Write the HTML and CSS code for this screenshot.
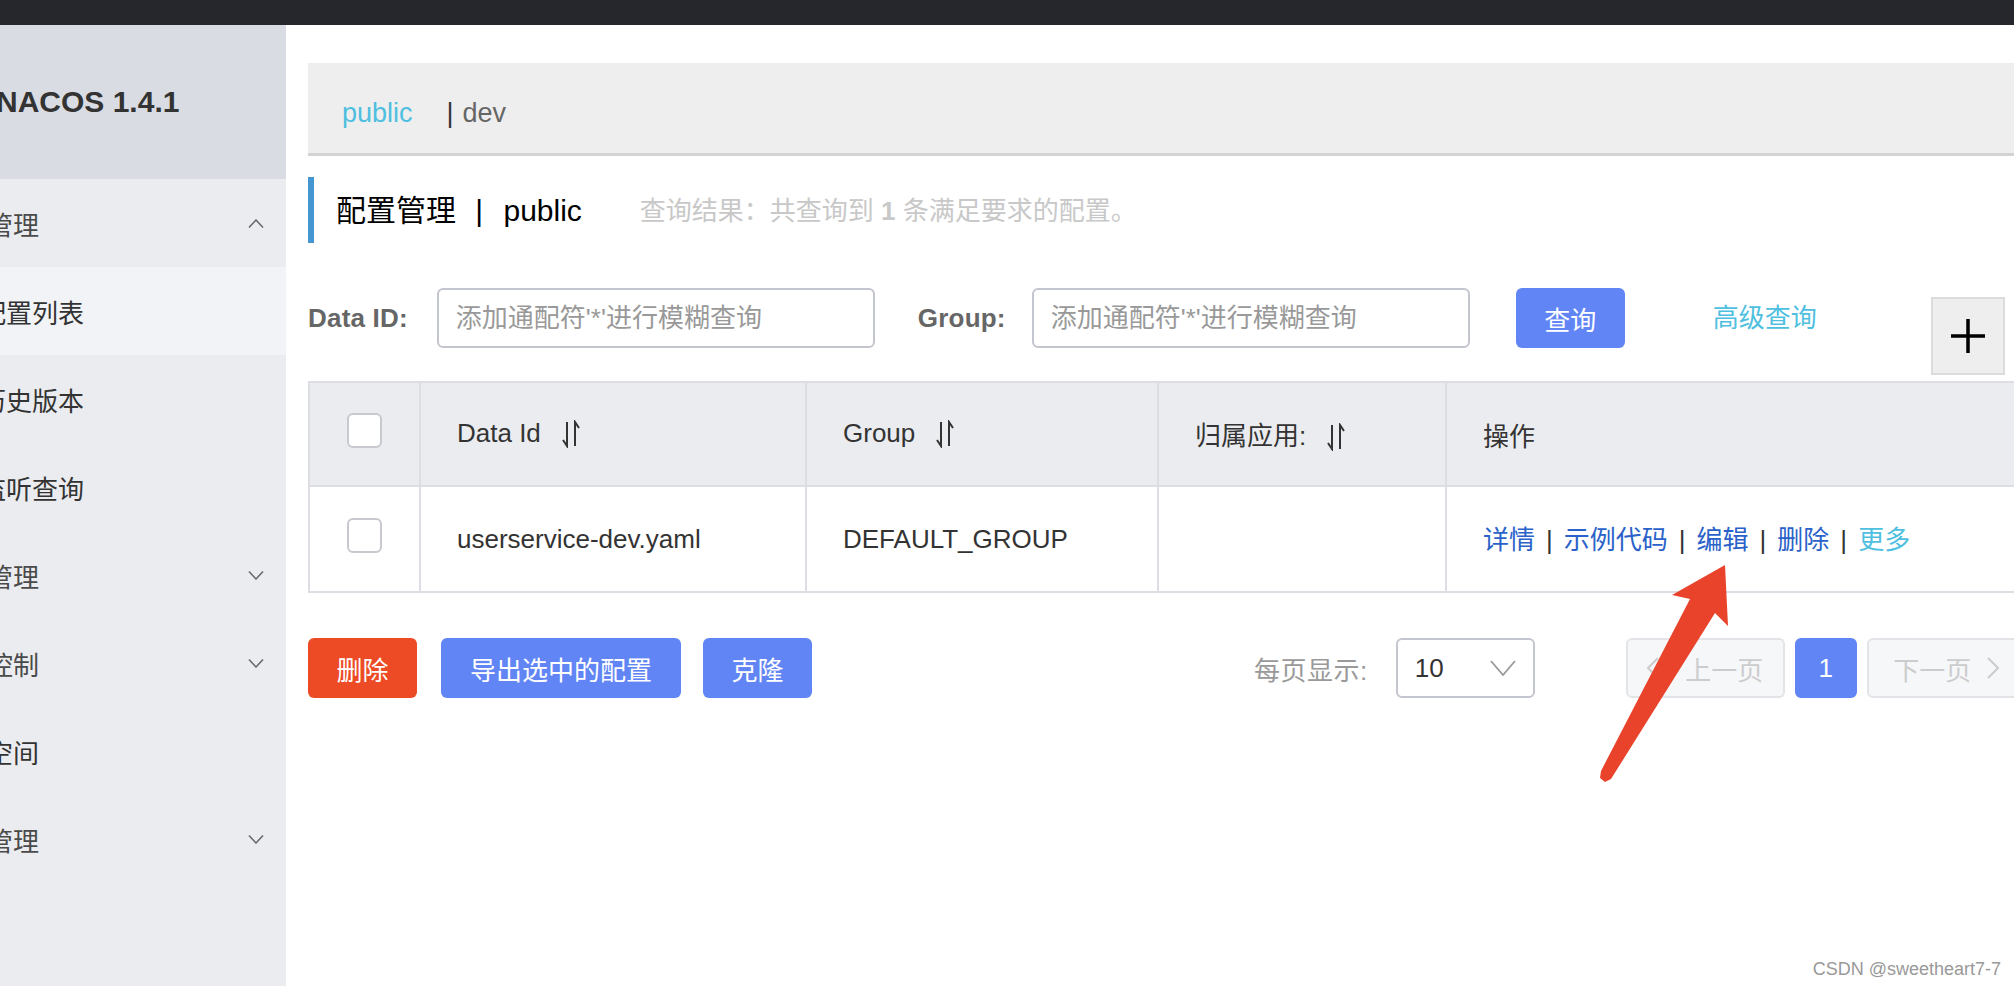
FILE: index.html
```html
<!DOCTYPE html>
<html lang="zh-CN">
<head>
<meta charset="utf-8">
<title>NACOS 配置管理</title>
<link rel="stylesheet" href="styles.css">
</head>
<body>
<div class="topbar"></div>
<div class="layout">
  <aside class="sidebar">
    <div class="brand"><span class="brand-text">NACOS 1.4.1</span></div>
    <ul class="nav">
      <li class="nav-item top"><span>配置管理</span><svg class="chev" viewBox="0 0 16 9"><path d="M1 8.5 L8 1 L15 8.5" fill="none" stroke="#666" stroke-width="1.5"/></svg></li>
      <li class="nav-item sub active"><span>配置列表</span></li>
      <li class="nav-item sub"><span>历史版本</span></li>
      <li class="nav-item sub"><span>监听查询</span></li>
      <li class="nav-item top"><span>服务管理</span><svg class="chev" viewBox="0 0 16 9"><path d="M1 0.5 L8 8 L15 0.5" fill="none" stroke="#666" stroke-width="1.5"/></svg></li>
      <li class="nav-item top"><span>权限控制</span><svg class="chev" viewBox="0 0 16 9"><path d="M1 0.5 L8 8 L15 0.5" fill="none" stroke="#666" stroke-width="1.5"/></svg></li>
      <li class="nav-item top dark"><span>命名空间</span></li>
      <li class="nav-item top"><span>集群管理</span><svg class="chev" viewBox="0 0 16 9"><path d="M1 0.5 L8 8 L15 0.5" fill="none" stroke="#666" stroke-width="1.5"/></svg></li>
    </ul>
  </aside>
  <main class="main">
    <div class="content">
      <div class="ns-bar">
        <span class="ns-cur">public</span><span class="ns-sep">|</span><span class="ns-other">dev</span>
      </div>
      <div class="title-row">
        <h1 class="title">配置管理 <span class="title-bar">|</span> public</h1>
        <span class="result">查询结果：共查询到 <b>1</b> 条满足要求的配置。</span>
      </div>
      <div class="toolbar">
        <label class="label">Data ID:</label>
        <input class="input" type="text" placeholder="添加通配符'*'进行模糊查询">
        <label class="label label-group">Group:</label>
        <input class="input input-group" type="text" placeholder="添加通配符'*'进行模糊查询">
        <button class="btn btn-primary btn-query">查询</button>
        <a class="adv">高级查询</a>
        <button class="add-btn"><svg viewBox="0 0 38 38" class="plus"><path d="M19 2 V36 M2 19 H36" stroke="#000" stroke-width="3.5"/></svg></button>
      </div>
      <table class="grid">
        <colgroup>
          <col class="c1"><col class="c2"><col class="c3"><col class="c4"><col class="c5">
        </colgroup>
        <thead>
          <tr>
            <th class="check-col"><span class="checkbox"></span></th>
            <th>Data Id<svg class="sort" viewBox="0 0 20 28"><path d="M6 2 V26 L2 20 M14 26 V2 L18 8" fill="none" stroke="#333" stroke-width="2"/></svg></th>
            <th>Group<svg class="sort" viewBox="0 0 20 28"><path d="M6 2 V26 L2 20 M14 26 V2 L18 8" fill="none" stroke="#333" stroke-width="2"/></svg></th>
            <th>归属应用:<svg class="sort" viewBox="0 0 20 28"><path d="M6 2 V26 L2 20 M14 26 V2 L18 8" fill="none" stroke="#333" stroke-width="2"/></svg></th>
            <th>操作</th>
          </tr>
        </thead>
        <tbody>
          <tr>
            <td class="check-col"><span class="checkbox"></span></td>
            <td>userservice-dev.yaml</td>
            <td>DEFAULT_GROUP</td>
            <td></td>
            <td class="actions"><a class="link">详情</a><span class="sep">|</span><a class="link">示例代码</a><span class="sep">|</span><a class="link">编辑</a><span class="sep">|</span><a class="link">删除</a><span class="sep">|</span><a class="link more">更多</a></td>
          </tr>
        </tbody>
      </table>
      <div class="footer-row">
        <button class="btn btn-danger btn-del">删除</button>
        <button class="btn btn-primary btn-export">导出选中的配置</button>
        <button class="btn btn-primary btn-clone">克隆</button>
        <div class="pager">
          <span class="pager-label">每页显示:</span>
          <div class="select"><span>10</span><svg class="sel-chev" viewBox="0 0 26 16"><path d="M1 1 L13 15 L25 1" fill="none" stroke="#999" stroke-width="1.8"/></svg></div>
          <button class="page-btn prev"><svg class="pg-chev" viewBox="0 0 12 22"><path d="M11 1 L1 11 L11 21" fill="none" stroke="#ccc" stroke-width="2"/></svg><span>上一页</span></button>
          <button class="page-btn num">1</button>
          <button class="page-btn next"><span>下一页</span><svg class="pg-chev" viewBox="0 0 12 22"><path d="M1 1 L11 11 L1 21" fill="none" stroke="#ccc" stroke-width="2"/></svg></button>
        </div>
      </div>
    </div>
  </main>
</div>
<svg class="annot-arrow" viewBox="0 0 2014 986"><polygon points="1725,565 1672,595 1690,599 1601,771 1600,778 1605,782 1611,779 1715,613 1728,626" fill="#e9432b"/></svg>
<div class="watermark">CSDN @sweetheart7-7</div>
</body>
</html>
```
FILE: styles.css
```css
* { box-sizing: border-box; }
html, body { margin: 0; padding: 0; }
body {
  width: 2014px;
  height: 986px;
  overflow: hidden;
  position: relative;
  background: #fff;
  color: #333;
  font-family: "Liberation Sans", "Noto Sans CJK SC", sans-serif;
}
.topbar { height: 25px; background: #25272c; }
.layout { display: flex; height: 961px; }

/* sidebar */
.sidebar { width: 286px; flex: none; background: #ebecf0; overflow: hidden; }
.brand { height: 154px; background: #d9dce3; display: flex; align-items: center; }
.brand-text { margin-left: -4px; font-size: 30px; font-weight: bold; color: #333; white-space: nowrap; }
.nav { list-style: none; margin: 0 0 0 -65px; padding: 0; width: calc(100% + 65px); }
.nav-item {
  height: 88px;
  display: flex;
  align-items: center;
  justify-content: space-between;
  padding-right: 22px;
  font-size: 26px;
  color: #4a4a4a;
  white-space: nowrap;
}
.nav-item.sub { padding-left: 45px; color: #333; }
.nav-item.dark { color: #333; }
.nav-item.active { background: #f2f3f6; }
.chev { width: 16px; height: 9px; flex: none; }

/* main */
.main { flex: 1; overflow: hidden; padding: 38px 0 0 22px; }
.content { width: 1760px; }
.ns-bar {
  height: 93px;
  background: #eeeeee;
  border-bottom: 3px solid #d3d3d3;
  display: flex;
  align-items: center;
  padding: 10px 0 0 34px;
  font-size: 27px;
}
.ns-cur { color: #4fbfdf; }
.ns-sep { color: #333; margin: 0 9px 0 34px; }
.ns-other { color: #666; }

.title-row {
  margin-top: 21px;
  height: 66px;
  border-left: 6px solid #4596d0;
  padding: 0 0 4px 22px;
  display: flex;
  align-items: center;
}
.title { margin: 0; font-size: 30px; font-weight: normal; color: #000; white-space: nowrap; }
.title-bar { display: inline-block; margin: 0 12px 0 11px; color: #000; }
.result { margin-left: 58px; font-size: 26px; color: #c8c8c8; white-space: nowrap; }
.result b { font-weight: bold; }

.toolbar { margin-top: 45px; display: flex; align-items: flex-start; height: 87px; }
.label { font-size: 26px; font-weight: bold; color: #666; line-height: 60px; white-space: nowrap; letter-spacing: 0.2px; }
.label-group { margin-left: 43px; }
.input {
  margin-left: 29px;
  width: 438px;
  height: 60px;
  border: 2px solid #c4c6cf;
  border-radius: 6px;
  padding: 0 17px;
  font-family: "Liberation Sans", "Noto Sans CJK SC", sans-serif;
  font-size: 26px;
  color: #333;
  background: #fff;
  outline: none;
}
.input.input-group { margin-left: 26px; }
.input::placeholder { color: #999; }
.btn {
  height: 60px;
  border: none;
  border-radius: 6px;
  color: #fff;
  font-family: "Liberation Sans", "Noto Sans CJK SC", sans-serif;
  font-size: 26px;
  padding: 0;
  display: flex;
  align-items: center;
  justify-content: center;
}
.btn-primary { background: #6185f5; }
.btn-danger { background: #ed4a26; }
.btn-query { margin-left: 46px; width: 109px; }
.adv { margin-left: 88px; font-size: 26px; line-height: 60px; color: #4fbfdf; white-space: nowrap; }
.add-btn {
  margin-left: 114px;
  margin-top: 9px;
  width: 74px;
  height: 78px;
  background: #eeeeee;
  border: 2px solid #dcdcdc;
  padding: 0;
  display: flex;
  align-items: center;
  justify-content: center;
}
.plus { width: 38px; height: 38px; }

/* table */
.grid {
  margin-top: 6px;
  border-collapse: collapse;
  table-layout: fixed;
  width: 1740px;
  font-size: 26px;
}
.c1 { width: 111px; }
.c2 { width: 386px; }
.c3 { width: 352px; }
.c4 { width: 288px; }
.c5 { width: 603px; }
.grid th, .grid td {
  border: 2px solid #dcdee3;
  padding: 0 0 0 36px;
  text-align: left;
  font-weight: normal;
  color: #333;
  white-space: nowrap;
}
.grid thead th { height: 104px; background: #ebecf0; }
.grid tbody td { height: 106px; }
.grid .check-col { padding: 0; text-align: center; }
.checkbox {
  display: inline-block;
  width: 35px;
  height: 35px;
  border: 2px solid #c8c9ce;
  border-radius: 6px;
  background: #fff;
  vertical-align: middle;
  position: relative;
  top: -4px;
}
.sort { width: 20px; height: 28px; margin-left: 20px; vertical-align: middle; position: relative; top: -2px; }
.actions { padding-bottom: 4px !important; }
.link { color: #2a62c9; }
.link.more { color: #4fbfdf; }
.sep { color: #333; margin: 0 11px; }

/* footer */
.footer-row { margin-top: 45px; display: flex; align-items: center; }
.btn-del { width: 109px; }
.btn-export { width: 240px; margin-left: 24px; }
.btn-clone { width: 109px; margin-left: 22px; }
.pager { margin-left: 442px; display: flex; align-items: center; }
.pager-label { font-size: 26px; color: #999; white-space: nowrap; letter-spacing: 0.5px; }
.select {
  margin-left: 28px;
  width: 139px;
  height: 60px;
  border: 2px solid #c4c6cf;
  border-radius: 6px;
  padding: 0 17px 0 17px;
  display: flex;
  align-items: center;
  justify-content: space-between;
  font-size: 26px;
  color: #333;
}
.sel-chev { width: 26px; height: 16px; }
.page-btn {
  height: 60px;
  border: 2px solid #e3e4e8;
  border-radius: 6px;
  background: #f6f7f9;
  color: #ccc;
  font-family: "Liberation Sans", "Noto Sans CJK SC", sans-serif;
  font-size: 26px;
  padding: 0;
  display: flex;
  align-items: center;
  justify-content: center;
}
.page-btn.prev { width: 159px; margin-left: 91px; gap: 26px; }
.page-btn.num { width: 62px; margin-left: 10px; background: #6185f5; border-color: #6185f5; color: #fff; }
.page-btn.next { width: 159px; margin-left: 10px; gap: 16px; flex: none; }
.pg-chev { width: 12px; height: 22px; }

/* overlays */
.annot-arrow { position: absolute; left: 0; top: 0; width: 2014px; height: 986px; pointer-events: none; }
.watermark {
  position: absolute;
  right: 13px;
  bottom: 6px;
  font-size: 18px;
  color: #999;
  text-shadow: 0 0 2px #fff;
}
```
